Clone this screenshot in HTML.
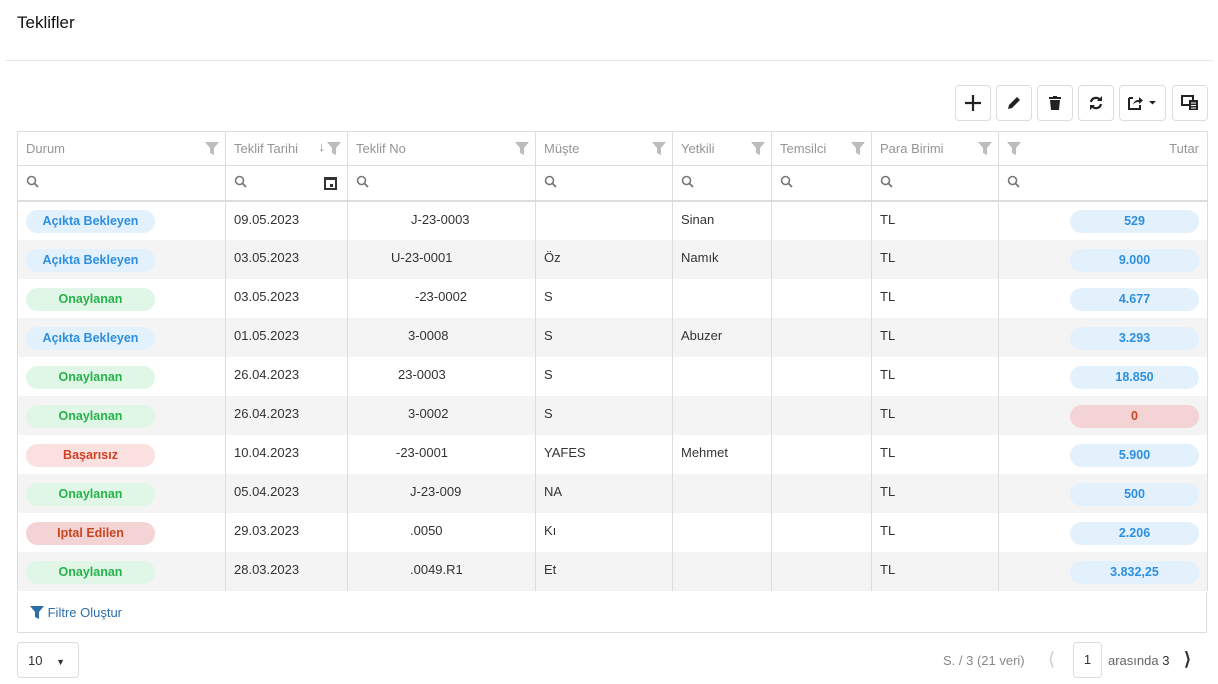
<!DOCTYPE html>
<html><head><meta charset="utf-8"><style>
*{box-sizing:border-box;margin:0;padding:0}
body{width:1218px;height:684px;background:#fff;font-family:"Liberation Sans",sans-serif;font-size:13px;color:#333;position:relative;overflow:hidden}
.title{position:absolute;left:17px;top:13px;font-size:17px;color:#111}
.hr{position:absolute;left:5px;right:5px;top:60px;border-top:1px solid #e8e8e8}
.tb{position:absolute;top:85px;width:36px;height:36px;border:1px solid #ddd;border-radius:4px;display:flex;align-items:center;justify-content:center}
table{position:absolute;left:17px;top:131px;border-collapse:collapse;table-layout:fixed;width:1190px}
td,th{border-left:1px solid #ddd;border-right:1px solid #ddd;padding:0 8px;white-space:nowrap;overflow:hidden;font-weight:normal;text-align:left}
tr.h th{height:34px;color:#959595;border-top:1px solid #ddd;border-bottom:1px solid #ddd;position:relative}
tr.f td{height:35px;border-bottom:2px solid #ddd}
tr.d td{height:39px;padding-bottom:3px}
tr.d:nth-child(even) td{background:#f4f4f4}
.fi{position:absolute;right:6px;top:9px}
.b{display:inline-block;width:129px;height:23px;line-height:23px;border-radius:12px;text-align:center;font-weight:bold;font-size:12.5px;margin-top:5px}
.bl{background:#e3f1fd;color:#2d8fe0}.gr{background:#e0f6e6;color:#26b34a}.rd{background:#fae0df;color:#d13f24}.rd2{background:#f4d3d4;color:#c94620}
.foot{position:absolute;left:17px;top:592px;width:1190px;height:41px;border:1px solid #ddd;border-top:none;color:#2d6ea8;padding:13px 0 0 12px}
</style></head><body>
<div class="title">Teklifler</div>
<div class="hr"></div>
<div class="tb" style="left:955px"><svg width="18" height="18"><path d="M9 1v16M1 9h16" stroke="#222" stroke-width="2.2"/></svg></div>
<div class="tb" style="left:996px"><svg width="16" height="16"><path d="M2 14l1-4 8-8 3 3-8 8z" fill="#222"/></svg></div>
<div class="tb" style="left:1037px"><svg width="16" height="16"><path d="M2 2h12v2H2zM6 1h4v1H6zM3 5h10l-1 10H4z" fill="#222"/></svg></div>
<div class="tb" style="left:1078px"><svg width="16" height="16"><path d="M3 7a5 5 0 0 1 9-2M13 9a5 5 0 0 1-9 2" stroke="#222" stroke-width="2.2" fill="none"/><path d="M14 1v5H9zM2 15v-5h5z" fill="#222"/></svg></div>
<div class="tb" style="left:1119px;width:47px"><svg width="30" height="16"><path d="M1 3h4M1 3v11h11v-4" stroke="#222" stroke-width="2" fill="none"/><path d="M5 10c1-4 3-5 6-5V2l4 3.5-4 3.5V7c-3 0-5 1-6 3z" fill="#222"/><path d="M21 6h7l-3.5 3.5z" fill="#222"/></svg></div>
<div class="tb" style="left:1172px"><svg width="18" height="16"><path d="M1 1h11v9H1z" fill="none" stroke="#222" stroke-width="2"/><path d="M8 5h9v10H8z" fill="#222"/><path d="M10 8h5M10 10.5h5M10 13h5" stroke="#fff"/></svg></div>
<table>
<colgroup><col style="width:208px"><col style="width:122px"><col style="width:188px"><col style="width:137px"><col style="width:99px"><col style="width:100px"><col style="width:127px"><col style="width:209px"></colgroup>
<tr class="h"><th>Durum<svg class="fi" width="14" height="14"><path d="M0 1h14L9 7v7L5 12V7z" fill="#bdbdbd"/></svg></th><th>Teklif Tarihi<span style="position:absolute;right:22px;top:7px;color:#888">↓</span><svg class="fi" width="14" height="14"><path d="M0 1h14L9 7v7L5 12V7z" fill="#bdbdbd"/></svg></th><th>Teklif No<svg class="fi" width="14" height="14"><path d="M0 1h14L9 7v7L5 12V7z" fill="#bdbdbd"/></svg></th><th>Müşte<svg class="fi" width="14" height="14"><path d="M0 1h14L9 7v7L5 12V7z" fill="#bdbdbd"/></svg></th><th>Yetkili<svg class="fi" width="14" height="14"><path d="M0 1h14L9 7v7L5 12V7z" fill="#bdbdbd"/></svg></th><th>Temsilci<svg class="fi" width="14" height="14"><path d="M0 1h14L9 7v7L5 12V7z" fill="#bdbdbd"/></svg></th><th>Para Birimi<svg class="fi" width="14" height="14"><path d="M0 1h14L9 7v7L5 12V7z" fill="#bdbdbd"/></svg></th><th style="text-align:right">Tutar<svg style="position:absolute;left:8px;top:9px" width="14" height="14"><path d="M0 1h14L9 7v7L5 12V7z" fill="#bdbdbd"/></svg></th></tr>
<tr class="f">
<td><svg width="13" height="13"><circle cx="5.5" cy="5.5" r="4" stroke="#777" stroke-width="1.6" fill="none"/><path d="M8.5 8.5l3.5 3.5" stroke="#777" stroke-width="1.8"/></svg></td>
<td style="position:relative"><svg width="13" height="13"><circle cx="5.5" cy="5.5" r="4" stroke="#777" stroke-width="1.6" fill="none"/><path d="M8.5 8.5l3.5 3.5" stroke="#777" stroke-width="1.8"/></svg><svg style="position:absolute;right:9px;top:9px" width="15" height="15"><path d="M1 2h13v13H1z" fill="#333"/><path d="M3 5h9v8H3z" fill="#fff"/><path d="M7 9h3v3H7z" fill="#333"/></svg></td>
<td><svg width="13" height="13"><circle cx="5.5" cy="5.5" r="4" stroke="#777" stroke-width="1.6" fill="none"/><path d="M8.5 8.5l3.5 3.5" stroke="#777" stroke-width="1.8"/></svg></td>
<td><svg width="13" height="13"><circle cx="5.5" cy="5.5" r="4" stroke="#777" stroke-width="1.6" fill="none"/><path d="M8.5 8.5l3.5 3.5" stroke="#777" stroke-width="1.8"/></svg></td>
<td><svg width="13" height="13"><circle cx="5.5" cy="5.5" r="4" stroke="#777" stroke-width="1.6" fill="none"/><path d="M8.5 8.5l3.5 3.5" stroke="#777" stroke-width="1.8"/></svg></td>
<td><svg width="13" height="13"><circle cx="5.5" cy="5.5" r="4" stroke="#777" stroke-width="1.6" fill="none"/><path d="M8.5 8.5l3.5 3.5" stroke="#777" stroke-width="1.8"/></svg></td>
<td><svg width="13" height="13"><circle cx="5.5" cy="5.5" r="4" stroke="#777" stroke-width="1.6" fill="none"/><path d="M8.5 8.5l3.5 3.5" stroke="#777" stroke-width="1.8"/></svg></td>
<td><svg width="13" height="13"><circle cx="5.5" cy="5.5" r="4" stroke="#777" stroke-width="1.6" fill="none"/><path d="M8.5 8.5l3.5 3.5" stroke="#777" stroke-width="1.8"/></svg></td></tr>
<tr class="d"><td><span class="b bl">Açıkta Bekleyen</span></td><td>09.05.2023</td><td style="padding-left:63px">J-23-0003</td><td></td><td>Sinan</td><td></td><td>TL</td><td style="text-align:right"><span class="b bl">529</span></td></tr>
<tr class="d"><td><span class="b bl">Açıkta Bekleyen</span></td><td>03.05.2023</td><td style="padding-left:43px">U-23-0001</td><td>Öz</td><td>Namık</td><td></td><td>TL</td><td style="text-align:right"><span class="b bl">9.000</span></td></tr>
<tr class="d"><td><span class="b gr">Onaylanan</span></td><td>03.05.2023</td><td style="padding-left:67px">-23-0002</td><td>S</td><td></td><td></td><td>TL</td><td style="text-align:right"><span class="b bl">4.677</span></td></tr>
<tr class="d"><td><span class="b bl">Açıkta Bekleyen</span></td><td>01.05.2023</td><td style="padding-left:60px">3-0008</td><td>S</td><td>Abuzer</td><td></td><td>TL</td><td style="text-align:right"><span class="b bl">3.293</span></td></tr>
<tr class="d"><td><span class="b gr">Onaylanan</span></td><td>26.04.2023</td><td style="padding-left:50px">23-0003</td><td>S</td><td></td><td></td><td>TL</td><td style="text-align:right"><span class="b bl">18.850</span></td></tr>
<tr class="d"><td><span class="b gr">Onaylanan</span></td><td>26.04.2023</td><td style="padding-left:60px">3-0002</td><td>S</td><td></td><td></td><td>TL</td><td style="text-align:right"><span class="b rd2">0</span></td></tr>
<tr class="d"><td><span class="b rd">Başarısız</span></td><td>10.04.2023</td><td style="padding-left:48px">-23-0001</td><td>YAFES</td><td>Mehmet</td><td></td><td>TL</td><td style="text-align:right"><span class="b bl">5.900</span></td></tr>
<tr class="d"><td><span class="b gr">Onaylanan</span></td><td>05.04.2023</td><td style="padding-left:62px">J-23-009</td><td>NA</td><td></td><td></td><td>TL</td><td style="text-align:right"><span class="b bl">500</span></td></tr>
<tr class="d"><td><span class="b rd2">Iptal Edilen</span></td><td>29.03.2023</td><td style="padding-left:62px">.0050</td><td>Kı</td><td></td><td></td><td>TL</td><td style="text-align:right"><span class="b bl">2.206</span></td></tr>
<tr class="d"><td><span class="b gr">Onaylanan</span></td><td>28.03.2023</td><td style="padding-left:62px">.0049.R1</td><td>Et</td><td></td><td></td><td>TL</td><td style="text-align:right"><span class="b bl">3.832,25</span></td></tr>
</table>
<div class="foot"><svg width="14" height="14" style="vertical-align:-2px"><path d="M0 1h14L9 7v7L5 12V7z" fill="#2d6ea8"/></svg> Filtre Oluştur</div>
<div style="position:absolute;left:17px;top:642px;width:62px;height:36px;border:1px solid #ddd;border-radius:4px;padding:10px 0 0 10px">10 <span style="font-size:9px;margin-left:10px">▼</span></div>
<div style="position:absolute;left:943px;top:653px;color:#888">S. / 3 (21 veri)</div>
<div style="position:absolute;left:1048px;top:649px;color:#ccc;font-size:18px">&#10216;</div>
<div style="position:absolute;left:1073px;top:642px;width:29px;height:36px;border:1px solid #ddd;border-radius:4px;text-align:center;line-height:34px">1</div>
<div style="position:absolute;left:1108px;top:653px;color:#666">arasında <span style="color:#333">3</span></div>
<div style="position:absolute;left:1184px;top:649px;color:#333;font-size:18px;font-weight:bold">&#10217;</div>
</body></html>
